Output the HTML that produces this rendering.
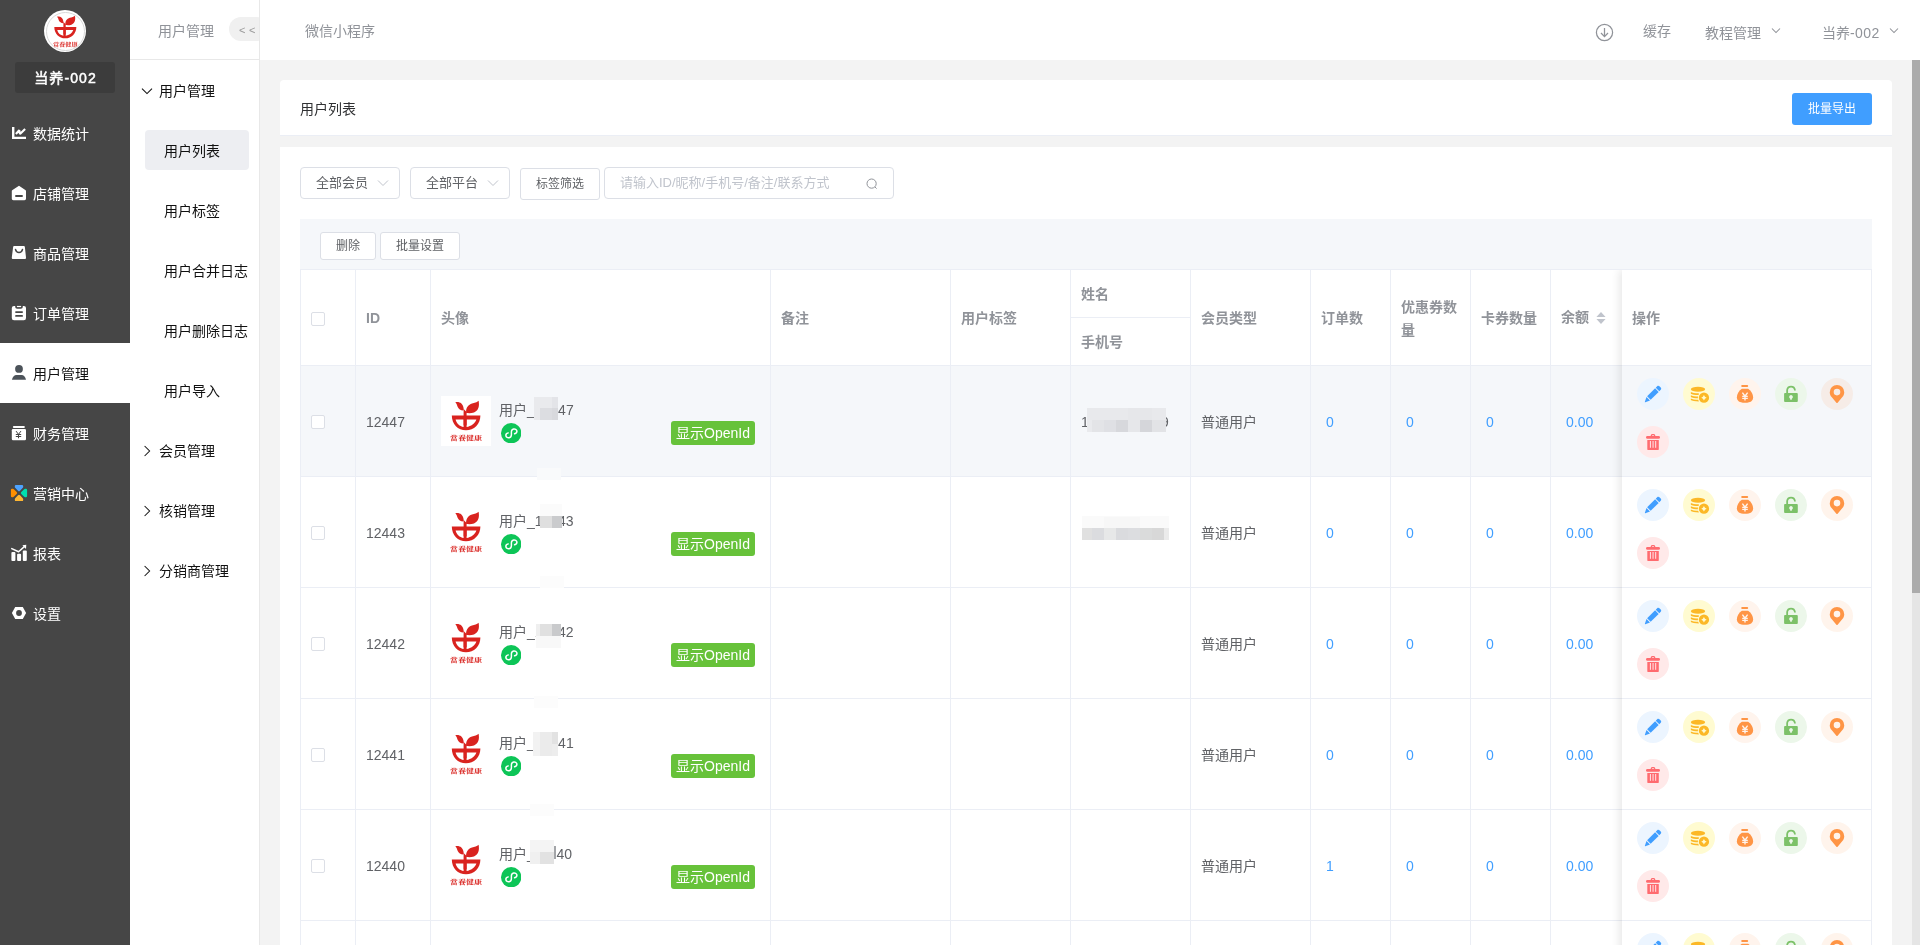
<!DOCTYPE html>
<html lang="zh-CN"><head><meta charset="utf-8"><title>用户列表</title>
<style>
*{box-sizing:border-box;margin:0;padding:0}
html,body{width:1920px;height:945px;overflow:hidden}
body{-webkit-font-smoothing:antialiased;background:#f3f3f3;font-family:"Liberation Sans","Noto Sans CJK SC",sans-serif;font-size:14px;color:#606266;position:relative}
.abs{position:absolute}
#side{position:absolute;left:0;top:0;width:130px;height:945px;background:#464646}
#side,#sub,#top,.card{will-change:transform}
#side .lg{position:absolute;left:44px;top:10px;width:42px;height:42px;border-radius:50%;background:#fff;overflow:hidden}
#side .lg svg{position:absolute;left:1.7px;top:2.4px}
#side .lg:after{content:"";position:absolute;left:1.5px;top:1.5px;right:1.5px;bottom:1.5px;border:1px solid #d8d8d8;border-radius:50%}
#side .nm{position:absolute;left:15px;top:62px;width:100px;height:31px;background:#3c3c3c;border-radius:3px;color:#fff;font-size:14px;font-weight:normal;-webkit-text-stroke:.5px #fff;text-align:center;line-height:32px;letter-spacing:1.1px;padding-left:1px}
.m1{position:absolute;left:0;width:130px;height:60px;color:#fff;font-size:14px;line-height:60px}
.m1.act{background:#fff;color:#111}
.m1 .mi{position:absolute;left:12px;top:23px}
.m1 span{position:absolute;left:33px;top:1px;white-space:nowrap}
#sub{position:absolute;left:130px;top:0;width:130px;height:945px;background:#fff;border-right:1px solid #e8e8e8}
#sub .hd{position:absolute;left:0;top:0;width:129px;height:60px;border-bottom:1px solid #e8e8e8;color:#909399;font-size:14px;line-height:60px}
#sub .hd span{position:absolute;left:28px;top:1px}
#sub .hd i{position:absolute;left:99px;top:17px;width:40px;height:24px;border-radius:12px;background:#f0f0f0;font-style:normal;color:#999;font-size:11px;line-height:27px;padding-left:10px;letter-spacing:3.5px;overflow:hidden}
#sub .hd{overflow:hidden}
.g{position:absolute;left:0;width:129px;height:60px;line-height:60px;color:#111;font-size:14px}
.g .chev{position:absolute;left:11px;top:24px}
.g span{position:absolute;left:29px;top:0;white-space:nowrap}
.s{position:absolute;left:15px;width:104px;height:40px;line-height:40px;color:#111;font-size:14px;border-radius:4px}
.s.act{background:#edeef2}
.s span{position:absolute;left:19px;top:1px;white-space:nowrap}
#top{position:absolute;left:260px;top:0;width:1660px;height:60px;background:#fff;color:#909399;font-size:14px}
#top span{position:absolute;white-space:nowrap;line-height:20px}
#sb{position:absolute;left:1912px;top:60px;width:8px;height:885px;background:#e5e5e5}
#sb i{position:absolute;left:0;top:0;width:8px;height:533px;background:#ababab}
.card{position:absolute;left:280px;width:1612px;background:#fff;border-radius:4px}
#c1{top:80px;height:56px;border-radius:4px 4px 0 0;border-bottom:1px solid #ebeef5}
#c1 .tt{position:absolute;left:20px;top:19px;font-size:14px;color:#303133;line-height:20px}
#c1 .bt{position:absolute;left:1512px;top:13px;width:80px;height:32px;background:#409eff;border-radius:3px;color:#fff;font-size:12px;text-align:center;line-height:32px}
#c2{top:147px;height:820px;border-radius:0}
.sel{position:absolute;top:20px;width:100px;height:32px;border:1px solid #dcdfe6;border-radius:4px;font-size:13px;color:#606266;line-height:30px;padding-left:15px;background:#fff}
.sel svg{position:absolute;right:10px;top:9px}
.btn{position:absolute;border:1px solid #dcdfe6;border-radius:3px;background:#fff;font-size:12px;color:#606266;text-align:center}
.inp{position:absolute;left:324px;top:20px;width:290px;height:32px;border:1px solid #dcdfe6;border-radius:4px;font-size:13px;color:#c0c4cc;line-height:30px;padding-left:15px;background:#fff}
.inp svg{position:absolute;right:14px;top:9px}
#tb{position:absolute;left:20px;top:72px;width:1572px;height:51px;background:#f5f7fa}
#tbl{position:absolute;left:20px;top:122px;width:1572px;height:700px;border-left:1px solid #ebeef5;border-top:1px solid #ebeef5;overflow:hidden}
#tbl .vl{position:absolute;top:0;width:1px;height:700px;background:#ebeef5}
#tbl .th{position:absolute;font-weight:bold;color:#909399;font-size:14px;line-height:23px;white-space:nowrap}
.hr{position:absolute;left:0;top:0;width:1572px;height:96px;border-bottom:1px solid #ebeef5}
.tr{position:absolute;left:-1px;width:1323px;height:111px;border-bottom:1px solid #ebeef5}
.tr.hov,.fr.hov{background:#f5f7fa}
.tr .t{position:absolute;font-size:14px;color:#606266;line-height:23px;white-space:nowrap}
.tr .t.lk{color:#409eff}
.cb{position:absolute;width:14px;height:14px;border:1px solid #dcdfe6;border-radius:2px;background:#fff}
.av{position:absolute;left:141px;top:30px;background:#fff}
.mp{position:absolute;left:200.9px;top:56.7px}
.oid{position:absolute;left:371px;top:55px;width:84px;height:24px;background:#67c23a;color:#fff;font-size:14px;line-height:24px;text-align:center;border-radius:3px;white-space:nowrap}
.gap{display:inline-block;height:1px}
.px{position:absolute;display:block}
#fx{position:absolute;left:1321px;top:0;width:250px;height:700px;background:#fff;border-right:1px solid #ebeef5;box-shadow:-3px 0 8px rgba(0,0,0,.09)}
.fh{position:absolute;left:0;top:0;width:249px;height:96px;border-bottom:1px solid #ebeef5}
.fh span{position:absolute;left:10px;top:37px;font-weight:bold;color:#909399;line-height:23px}
.fr{position:absolute;left:0;width:249px;height:111px;border-bottom:1px solid #ebeef5}
.ab{position:absolute}
</style></head><body>
<div id="side">
<div class="lg"><svg class="" viewBox="0 0 50 50" width="38.5" height="38.5"><g fill="#d9231f">
<path d="M14.3 6.2 C18 5.2 22 7 22.6 12.2 C22.8 13.4 22.7 14.2 22.4 14.6 C19.5 14.4 17.6 13.2 16.6 10.8 C16 9 15.6 7.4 14.3 6.2Z"/>
<path d="M37.6 4.8 C38.6 10 37.6 14.6 33 16.4 C30.4 17.4 27.6 17.2 25.2 17 C24.6 12 27 8.6 31 7.4 C33.6 6.8 36 6.4 37.6 4.8Z"/>
<path d="M22.6 13 L25.6 16 L25.6 29.2 L22.6 29.2Z"/>
<path d="M10.8 19.4 L39.4 19.4 C39.4 28 33 34.2 25 34.2 C17 34.2 10.8 28 10.8 19.4Z M14.6 23.4 C15.6 27.6 18.6 30.2 22.6 30.9 L22.6 23.4Z M25.6 23.4 L25.6 30.9 C30 30.2 34 27.6 35.4 23.4Z" fill-rule="evenodd"/>
</g><text x="25" y="44.4" text-anchor="middle" font-size="6.2" font-weight="bold" fill="#d9231f" font-family="'Noto Serif CJK SC','Noto Sans CJK SC',serif" textLength="32" lengthAdjust="spacingAndGlyphs">當養健康</text></svg></div>
<div class="nm">当养-002</div>
<div class="m1" style="top:103px"><svg class="mi" viewBox="0 0 14 14" width="14" height="14" style="overflow:visible"><path d="M0 0.9H2.4V10.8H14V13.1H0Z" fill="#fff"/><path d="M3.9 8L7.2 4.3L8 7.9L13.1 2.9" fill="none" stroke="#fff" stroke-width="2.1" stroke-linejoin="bevel"/></svg><span>数据统计</span></div>
<div class="m1" style="top:163px"><svg class="mi" viewBox="0 0 14 14" width="14" height="14" style="overflow:visible"><path d="M7 -0.3L13.3 3.9C13.8 4.2 14 4.5 14 5V12.6C14 13.6 13.4 14.2 12.4 14.2H1.4C0.4 14.2 -0.2 13.6 -0.2 12.6V5C-0.2 4.5 0 4.2 0.5 3.9Z M4 9A0.9 0.9 0 0 0 4 10.9H10A0.9 0.9 0 0 0 10 9Z" fill="#fff" fill-rule="evenodd"/></svg><span>店铺管理</span></div>
<div class="m1" style="top:223px"><svg class="mi" viewBox="0 0 14 14" width="14" height="14" style="overflow:visible"><path d="M2.4 0H11.6C12.4 0 12.8 0.4 12.9 1.2L14 11.6C14.1 12.6 13.6 13.1 12.6 13.1H1.2C0.2 13.1 -0.3 12.6 -0.2 11.6L1.1 1.2C1.2 0.4 1.6 0 2.4 0Z" fill="#fff"/><path d="M3.5 3.4C4 5.6 5.2 6.6 7 6.6C8.8 6.6 10 5.6 10.5 3.4" fill="none" stroke="#464646" stroke-width="1.5" stroke-linecap="round"/></svg><span>商品管理</span></div>
<div class="m1" style="top:283px"><svg class="mi" viewBox="0 0 14 14" width="14" height="14" style="overflow:visible"><rect x="-0.2" y="-0.1" width="14.2" height="14.3" rx="2.2" fill="#fff"/><path d="M3.2 -0.2H10.8V0.8C10.8 2 10 2.8 8.8 2.8H5.2C4 2.8 3.2 2 3.2 0.8Z" fill="#464646"/><rect x="4.9" y="-0.1" width="4.2" height="1.2" fill="#fff"/><rect x="3.2" y="5.2" width="7.7" height="1.7" rx="0.6" fill="#464646"/><rect x="3.2" y="9.1" width="7.7" height="1.7" rx="0.6" fill="#464646"/></svg><span>订单管理</span></div>
<div class="m1 act" style="top:343px"><svg class="mi" viewBox="0 0 14 14" width="14" height="14" style="overflow:visible"><circle cx="7" cy="2.9" r="3.9" fill="#4c535a"/><path d="M-0.1 13.8C0.6 10.6 2.4 8.9 4.4 8.9H9.6C11.6 8.9 13.4 10.6 14 13.8Z" fill="#4c535a"/></svg><span>用户管理</span></div>
<div class="m1" style="top:403px"><svg class="mi" viewBox="0 0 14 14" width="14" height="14" style="overflow:visible"><rect x="0.9" y="-0.1" width="12" height="2.1" rx="1" fill="#fff"/><rect x="-0.2" y="3" width="14.2" height="11.2" rx="1.2" fill="#fff"/><path d="M4.3 5.4L6.5 8.4L8.7 5.4M4.2 8.5H8.8M4.2 10.5H8.8M6.5 8.4V11.9" fill="none" stroke="#464646" stroke-width="1" stroke-linecap="round"/></svg><span>财务管理</span></div>
<div class="m1" style="top:463px"><svg class="mi" viewBox="0 0 14 14" width="14" height="14" style="overflow:visible"><g transform="translate(7,7)"><path d="M-3 -8.1H3Q4.2 -8.1 4.2 -6.9V-6.3Q4.2 -5.5 3.6 -4.9L1 -2.3Q0 -1.3 -1 -2.3L-3.6 -4.9Q-4.2 -5.5 -4.2 -6.3V-6.9Q-4.2 -8.1 -3 -8.1Z" fill="#4da3ff" transform="rotate(0)"/><path d="M-3 -8.1H3Q4.2 -8.1 4.2 -6.9V-6.3Q4.2 -5.5 3.6 -4.9L1 -2.3Q0 -1.3 -1 -2.3L-3.6 -4.9Q-4.2 -5.5 -4.2 -6.3V-6.9Q-4.2 -8.1 -3 -8.1Z" fill="#00dfb0" transform="rotate(90)"/><path d="M-3 -8.1H3Q4.2 -8.1 4.2 -6.9V-6.3Q4.2 -5.5 3.6 -4.9L1 -2.3Q0 -1.3 -1 -2.3L-3.6 -4.9Q-4.2 -5.5 -4.2 -6.3V-6.9Q-4.2 -8.1 -3 -8.1Z" fill="#ffb733" transform="rotate(180)"/><path d="M-3 -8.1H3Q4.2 -8.1 4.2 -6.9V-6.3Q4.2 -5.5 3.6 -4.9L1 -2.3Q0 -1.3 -1 -2.3L-3.6 -4.9Q-4.2 -5.5 -4.2 -6.3V-6.9Q-4.2 -8.1 -3 -8.1Z" fill="#ff8f00" transform="rotate(270)"/></g></svg><span>营销中心</span></div>
<div class="m1" style="top:523px"><svg class="mi" viewBox="0 0 14 14" width="14" height="14" style="overflow:visible"><g transform="translate(-1,-1)"><rect x="0.4" y="6.9" width="4" height="9" rx="1" fill="#fff"/><rect x="6.1" y="8.8" width="4" height="7.1" rx="1" fill="#fff"/><rect x="11.8" y="5.5" width="4" height="10.4" rx="1" fill="#fff"/><path d="M0.2 3.4L7.6 6.8L13.6 1.4" fill="none" stroke="#fff" stroke-width="1.5" stroke-linejoin="round"/><path d="M11.4 0.2L15.3 -0.2L15 3.9Z" fill="#fff"/></g></svg><span>报表</span></div>
<div class="m1" style="top:583px"><svg class="mi" viewBox="0 0 14 14" width="14" height="14" style="overflow:visible"><path d="M-0.1 7L3.2 1H10.8L14.1 7L10.8 13H3.2Z M7 4.1A2.9 2.9 0 1 0 7 9.9A2.9 2.9 0 1 0 7 4.1Z" fill="#fff" fill-rule="evenodd"/></svg><span>设置</span></div>
</div>
<div id="sub">
<div class="hd"><span>用户管理</span><i>&lt;&lt;</i></div>
<div class="g" style="top:61px"><svg class="chev" viewBox="0 0 12 12" width="12" height="12"><path d="M1 3.6L6 8.6L11 3.6" fill="none" stroke="#111" stroke-width="1.05"/></svg><span>用户管理</span></div>
<div class="s act" style="top:130px"><span>用户列表</span></div>
<div class="s" style="top:190px"><span>用户标签</span></div>
<div class="s" style="top:250px"><span>用户合并日志</span></div>
<div class="s" style="top:310px"><span>用户删除日志</span></div>
<div class="s" style="top:370px"><span>用户导入</span></div>
<div class="g" style="top:421px"><svg class="chev" viewBox="0 0 12 12" width="12" height="12"><path d="M3.6 1L8.6 6L3.6 11" fill="none" stroke="#111" stroke-width="1.05"/></svg><span>会员管理</span></div>
<div class="g" style="top:481px"><svg class="chev" viewBox="0 0 12 12" width="12" height="12"><path d="M3.6 1L8.6 6L3.6 11" fill="none" stroke="#111" stroke-width="1.05"/></svg><span>核销管理</span></div>
<div class="g" style="top:541px"><svg class="chev" viewBox="0 0 12 12" width="12" height="12"><path d="M3.6 1L8.6 6L3.6 11" fill="none" stroke="#111" stroke-width="1.05"/></svg><span>分销商管理</span></div>
</div>
<div id="top">
<span style="left:45px;top:21px">微信小程序</span>
<svg class="abs" style="left:1335px;top:23px" width="19" height="19" viewBox="0 0 19 19"><circle cx="9.5" cy="9.5" r="8.1" fill="none" stroke="#909399" stroke-width="1.25"/><path d="M9.5 5V13.4M6 10L9.5 13.6L13 10" fill="none" stroke="#909399" stroke-width="1.25"/></svg>
<span style="left:1383px;top:21px">缓存</span>
<span style="left:1445px;top:23px">教程管理</span>
<svg class="abs" style="left:1511px;top:27px" width="10" height="8" viewBox="0 0 10 8"><path d="M1 1.5L5 5.5L9 1.5" fill="none" stroke="#8d9096" stroke-width="1.05"/></svg>
<span style="left:1562px;top:23px">当养<b style="font-weight:normal;letter-spacing:.45px">-002</b></span>
<svg class="abs" style="left:1629px;top:27px" width="10" height="8" viewBox="0 0 10 8"><path d="M1 1.5L5 5.5L9 1.5" fill="none" stroke="#8d9096" stroke-width="1.05"/></svg>
</div>
<div id="sb"><i></i></div>
<div class="card" id="c1"><span class="tt">用户列表</span><span class="bt">批量导出</span></div>
<div class="card" id="c2">
<div class="sel" style="left:20px">全部会员<svg width="12" height="12" viewBox="0 0 12 12"><path d="M1 3.5L6 8.5L11 3.5" fill="none" stroke="#c0c4cc" stroke-width="1"/></svg></div>
<div class="sel" style="left:130px">全部平台<svg width="12" height="12" viewBox="0 0 12 12"><path d="M1 3.5L6 8.5L11 3.5" fill="none" stroke="#c0c4cc" stroke-width="1"/></svg></div>
<div class="btn" style="left:240px;top:21px;width:80px;height:32px;line-height:30px">标签筛选</div>
<div class="inp">请输入ID/昵称/手机号/备注/联系方式<svg width="14" height="14" viewBox="0 0 14 14"><circle cx="6.6" cy="6.6" r="4.6" fill="none" stroke="#909399" stroke-width="1"/><path d="M10 10L11.6 11.6" stroke="#909399" stroke-width="1"/></svg></div>
<div id="tb"><div class="btn" style="left:20px;top:13px;width:56px;height:28px;line-height:26px">删除</div><div class="btn" style="left:80px;top:13px;width:80px;height:28px;line-height:26px">批量设置</div></div>
<div id="tbl">
<div class="hr">
<span class="cb" style="left:10px;top:42px"></span>
<span class="th" style="left:65px;top:37px">ID</span>
<span class="th" style="left:140px;top:37px">头像</span>
<span class="th" style="left:480px;top:37px">备注</span>
<span class="th" style="left:660px;top:37px">用户标签</span>
<span class="th" style="left:780px;top:13px">姓名</span>
<span class="th" style="left:780px;top:61px">手机号</span>
<span class="th" style="left:900px;top:37px">会员类型</span>
<span class="th" style="left:1020px;top:37px">订单数</span>
<span class="th" style="left:1100px;top:26px">优惠券数<br>量</span>
<span class="th" style="left:1180px;top:37px">卡券数量</span>
<span class="th" style="left:1260px;top:36px">余额</span>
<svg class="abs" style="left:1294px;top:41px" width="12" height="14" viewBox="0 0 12 14"><path d="M6 1L10.6 6H1.4Z M6 13L10.6 8H1.4Z" fill="#c0c4cc"/></svg>
<div class="abs" style="left:770px;top:47px;width:120px;height:1px;background:#ebeef5"></div>
</div>
<div class="tr hov" style="top:96px"><span class="cb" style="left:11px;top:49px"></span><span class="t" style="left:66px;top:45px">12447</span><svg class="av" viewBox="0 0 50 50" width="50" height="50"><g fill="#d9231f">
<path d="M14.3 6.2 C18 5.2 22 7 22.6 12.2 C22.8 13.4 22.7 14.2 22.4 14.6 C19.5 14.4 17.6 13.2 16.6 10.8 C16 9 15.6 7.4 14.3 6.2Z"/>
<path d="M37.6 4.8 C38.6 10 37.6 14.6 33 16.4 C30.4 17.4 27.6 17.2 25.2 17 C24.6 12 27 8.6 31 7.4 C33.6 6.8 36 6.4 37.6 4.8Z"/>
<path d="M22.6 13 L25.6 16 L25.6 29.2 L22.6 29.2Z"/>
<path d="M10.8 19.4 L39.4 19.4 C39.4 28 33 34.2 25 34.2 C17 34.2 10.8 28 10.8 19.4Z M14.6 23.4 C15.6 27.6 18.6 30.2 22.6 30.9 L22.6 23.4Z M25.6 23.4 L25.6 30.9 C30 30.2 34 27.6 35.4 23.4Z" fill-rule="evenodd"/>
</g><text x="25" y="44.4" text-anchor="middle" font-size="6.2" font-weight="bold" fill="#d9231f" font-family="'Noto Serif CJK SC','Noto Sans CJK SC',serif" textLength="32" lengthAdjust="spacingAndGlyphs">當養健康</text></svg><span class="t" style="left:199px;top:33px">用户_<span class="gap" style="width:23.3px"></span>47</span><svg class="mp" viewBox="0 0 20 20" width="20.4" height="20.4"><circle cx="10" cy="10" r="10" fill="#0dc557"/><path d="M13.3 10.6C15 10.2 15.8 9.1 15.6 7.8C15.3 6.3 13.8 5.6 12.4 5.9C11 6.2 10.2 7.3 10.2 8.6V11.6C10.2 12.9 9.4 14.1 8 14.4C6.6 14.7 5.1 14 4.8 12.5C4.6 11.2 5.4 10.1 7.1 9.7" fill="none" stroke="#fff" stroke-width="1.45" stroke-linecap="round"/></svg><span class="oid">显示OpenId</span><span class="t" style="left:781px;top:45px">1</span><span class="t" style="left:861px;top:45px">9</span><span class="t" style="left:901px;top:45px">普通用户</span><span class="t lk" style="left:1026px;top:45px">0</span><span class="t lk" style="left:1106px;top:45px">0</span><span class="t lk" style="left:1186px;top:45px">0</span><span class="t lk" style="left:1266px;top:45px">0.00</span></div><div class="tr" style="top:207px"><span class="cb" style="left:11px;top:49px"></span><span class="t" style="left:66px;top:45px">12443</span><svg class="av" viewBox="0 0 50 50" width="50" height="50"><g fill="#d9231f">
<path d="M14.3 6.2 C18 5.2 22 7 22.6 12.2 C22.8 13.4 22.7 14.2 22.4 14.6 C19.5 14.4 17.6 13.2 16.6 10.8 C16 9 15.6 7.4 14.3 6.2Z"/>
<path d="M37.6 4.8 C38.6 10 37.6 14.6 33 16.4 C30.4 17.4 27.6 17.2 25.2 17 C24.6 12 27 8.6 31 7.4 C33.6 6.8 36 6.4 37.6 4.8Z"/>
<path d="M22.6 13 L25.6 16 L25.6 29.2 L22.6 29.2Z"/>
<path d="M10.8 19.4 L39.4 19.4 C39.4 28 33 34.2 25 34.2 C17 34.2 10.8 28 10.8 19.4Z M14.6 23.4 C15.6 27.6 18.6 30.2 22.6 30.9 L22.6 23.4Z M25.6 23.4 L25.6 30.9 C30 30.2 34 27.6 35.4 23.4Z" fill-rule="evenodd"/>
</g><text x="25" y="44.4" text-anchor="middle" font-size="6.2" font-weight="bold" fill="#d9231f" font-family="'Noto Serif CJK SC','Noto Sans CJK SC',serif" textLength="32" lengthAdjust="spacingAndGlyphs">當養健康</text></svg><span class="t" style="left:199px;top:33px">用户_1<span class="gap" style="width:15.5px"></span>43</span><svg class="mp" viewBox="0 0 20 20" width="20.4" height="20.4"><circle cx="10" cy="10" r="10" fill="#0dc557"/><path d="M13.3 10.6C15 10.2 15.8 9.1 15.6 7.8C15.3 6.3 13.8 5.6 12.4 5.9C11 6.2 10.2 7.3 10.2 8.6V11.6C10.2 12.9 9.4 14.1 8 14.4C6.6 14.7 5.1 14 4.8 12.5C4.6 11.2 5.4 10.1 7.1 9.7" fill="none" stroke="#fff" stroke-width="1.45" stroke-linecap="round"/></svg><span class="oid">显示OpenId</span><span class="t" style="left:901px;top:45px">普通用户</span><span class="t lk" style="left:1026px;top:45px">0</span><span class="t lk" style="left:1106px;top:45px">0</span><span class="t lk" style="left:1186px;top:45px">0</span><span class="t lk" style="left:1266px;top:45px">0.00</span></div><div class="tr" style="top:318px"><span class="cb" style="left:11px;top:49px"></span><span class="t" style="left:66px;top:45px">12442</span><svg class="av" viewBox="0 0 50 50" width="50" height="50"><g fill="#d9231f">
<path d="M14.3 6.2 C18 5.2 22 7 22.6 12.2 C22.8 13.4 22.7 14.2 22.4 14.6 C19.5 14.4 17.6 13.2 16.6 10.8 C16 9 15.6 7.4 14.3 6.2Z"/>
<path d="M37.6 4.8 C38.6 10 37.6 14.6 33 16.4 C30.4 17.4 27.6 17.2 25.2 17 C24.6 12 27 8.6 31 7.4 C33.6 6.8 36 6.4 37.6 4.8Z"/>
<path d="M22.6 13 L25.6 16 L25.6 29.2 L22.6 29.2Z"/>
<path d="M10.8 19.4 L39.4 19.4 C39.4 28 33 34.2 25 34.2 C17 34.2 10.8 28 10.8 19.4Z M14.6 23.4 C15.6 27.6 18.6 30.2 22.6 30.9 L22.6 23.4Z M25.6 23.4 L25.6 30.9 C30 30.2 34 27.6 35.4 23.4Z" fill-rule="evenodd"/>
</g><text x="25" y="44.4" text-anchor="middle" font-size="6.2" font-weight="bold" fill="#d9231f" font-family="'Noto Serif CJK SC','Noto Sans CJK SC',serif" textLength="32" lengthAdjust="spacingAndGlyphs">當養健康</text></svg><span class="t" style="left:199px;top:33px">用户_1<span class="gap" style="width:15.5px"></span>42</span><svg class="mp" viewBox="0 0 20 20" width="20.4" height="20.4"><circle cx="10" cy="10" r="10" fill="#0dc557"/><path d="M13.3 10.6C15 10.2 15.8 9.1 15.6 7.8C15.3 6.3 13.8 5.6 12.4 5.9C11 6.2 10.2 7.3 10.2 8.6V11.6C10.2 12.9 9.4 14.1 8 14.4C6.6 14.7 5.1 14 4.8 12.5C4.6 11.2 5.4 10.1 7.1 9.7" fill="none" stroke="#fff" stroke-width="1.45" stroke-linecap="round"/></svg><span class="oid">显示OpenId</span><span class="t" style="left:901px;top:45px">普通用户</span><span class="t lk" style="left:1026px;top:45px">0</span><span class="t lk" style="left:1106px;top:45px">0</span><span class="t lk" style="left:1186px;top:45px">0</span><span class="t lk" style="left:1266px;top:45px">0.00</span></div><div class="tr" style="top:429px"><span class="cb" style="left:11px;top:49px"></span><span class="t" style="left:66px;top:45px">12441</span><svg class="av" viewBox="0 0 50 50" width="50" height="50"><g fill="#d9231f">
<path d="M14.3 6.2 C18 5.2 22 7 22.6 12.2 C22.8 13.4 22.7 14.2 22.4 14.6 C19.5 14.4 17.6 13.2 16.6 10.8 C16 9 15.6 7.4 14.3 6.2Z"/>
<path d="M37.6 4.8 C38.6 10 37.6 14.6 33 16.4 C30.4 17.4 27.6 17.2 25.2 17 C24.6 12 27 8.6 31 7.4 C33.6 6.8 36 6.4 37.6 4.8Z"/>
<path d="M22.6 13 L25.6 16 L25.6 29.2 L22.6 29.2Z"/>
<path d="M10.8 19.4 L39.4 19.4 C39.4 28 33 34.2 25 34.2 C17 34.2 10.8 28 10.8 19.4Z M14.6 23.4 C15.6 27.6 18.6 30.2 22.6 30.9 L22.6 23.4Z M25.6 23.4 L25.6 30.9 C30 30.2 34 27.6 35.4 23.4Z" fill-rule="evenodd"/>
</g><text x="25" y="44.4" text-anchor="middle" font-size="6.2" font-weight="bold" fill="#d9231f" font-family="'Noto Serif CJK SC','Noto Sans CJK SC',serif" textLength="32" lengthAdjust="spacingAndGlyphs">當養健康</text></svg><span class="t" style="left:199px;top:33px">用户_<span class="gap" style="width:23.3px"></span>41</span><svg class="mp" viewBox="0 0 20 20" width="20.4" height="20.4"><circle cx="10" cy="10" r="10" fill="#0dc557"/><path d="M13.3 10.6C15 10.2 15.8 9.1 15.6 7.8C15.3 6.3 13.8 5.6 12.4 5.9C11 6.2 10.2 7.3 10.2 8.6V11.6C10.2 12.9 9.4 14.1 8 14.4C6.6 14.7 5.1 14 4.8 12.5C4.6 11.2 5.4 10.1 7.1 9.7" fill="none" stroke="#fff" stroke-width="1.45" stroke-linecap="round"/></svg><span class="oid">显示OpenId</span><span class="t" style="left:901px;top:45px">普通用户</span><span class="t lk" style="left:1026px;top:45px">0</span><span class="t lk" style="left:1106px;top:45px">0</span><span class="t lk" style="left:1186px;top:45px">0</span><span class="t lk" style="left:1266px;top:45px">0.00</span></div><div class="tr" style="top:540px"><span class="cb" style="left:11px;top:49px"></span><span class="t" style="left:66px;top:45px">12440</span><svg class="av" viewBox="0 0 50 50" width="50" height="50"><g fill="#d9231f">
<path d="M14.3 6.2 C18 5.2 22 7 22.6 12.2 C22.8 13.4 22.7 14.2 22.4 14.6 C19.5 14.4 17.6 13.2 16.6 10.8 C16 9 15.6 7.4 14.3 6.2Z"/>
<path d="M37.6 4.8 C38.6 10 37.6 14.6 33 16.4 C30.4 17.4 27.6 17.2 25.2 17 C24.6 12 27 8.6 31 7.4 C33.6 6.8 36 6.4 37.6 4.8Z"/>
<path d="M22.6 13 L25.6 16 L25.6 29.2 L22.6 29.2Z"/>
<path d="M10.8 19.4 L39.4 19.4 C39.4 28 33 34.2 25 34.2 C17 34.2 10.8 28 10.8 19.4Z M14.6 23.4 C15.6 27.6 18.6 30.2 22.6 30.9 L22.6 23.4Z M25.6 23.4 L25.6 30.9 C30 30.2 34 27.6 35.4 23.4Z" fill-rule="evenodd"/>
</g><text x="25" y="44.4" text-anchor="middle" font-size="6.2" font-weight="bold" fill="#d9231f" font-family="'Noto Serif CJK SC','Noto Sans CJK SC',serif" textLength="32" lengthAdjust="spacingAndGlyphs">當養健康</text></svg><span class="t" style="left:199px;top:33px">用户_<span class="gap" style="width:21.6px"></span>40</span><svg class="mp" viewBox="0 0 20 20" width="20.4" height="20.4"><circle cx="10" cy="10" r="10" fill="#0dc557"/><path d="M13.3 10.6C15 10.2 15.8 9.1 15.6 7.8C15.3 6.3 13.8 5.6 12.4 5.9C11 6.2 10.2 7.3 10.2 8.6V11.6C10.2 12.9 9.4 14.1 8 14.4C6.6 14.7 5.1 14 4.8 12.5C4.6 11.2 5.4 10.1 7.1 9.7" fill="none" stroke="#fff" stroke-width="1.45" stroke-linecap="round"/></svg><span class="oid">显示OpenId</span><span class="t" style="left:901px;top:45px">普通用户</span><span class="t lk" style="left:1026px;top:45px">1</span><span class="t lk" style="left:1106px;top:45px">0</span><span class="t lk" style="left:1186px;top:45px">0</span><span class="t lk" style="left:1266px;top:45px">0.00</span></div><div class="tr" style="top:651px"><span class="cb" style="left:11px;top:49px"></span><span class="t" style="left:66px;top:45px">12439</span><svg class="av" viewBox="0 0 50 50" width="50" height="50"><g fill="#d9231f">
<path d="M14.3 6.2 C18 5.2 22 7 22.6 12.2 C22.8 13.4 22.7 14.2 22.4 14.6 C19.5 14.4 17.6 13.2 16.6 10.8 C16 9 15.6 7.4 14.3 6.2Z"/>
<path d="M37.6 4.8 C38.6 10 37.6 14.6 33 16.4 C30.4 17.4 27.6 17.2 25.2 17 C24.6 12 27 8.6 31 7.4 C33.6 6.8 36 6.4 37.6 4.8Z"/>
<path d="M22.6 13 L25.6 16 L25.6 29.2 L22.6 29.2Z"/>
<path d="M10.8 19.4 L39.4 19.4 C39.4 28 33 34.2 25 34.2 C17 34.2 10.8 28 10.8 19.4Z M14.6 23.4 C15.6 27.6 18.6 30.2 22.6 30.9 L22.6 23.4Z M25.6 23.4 L25.6 30.9 C30 30.2 34 27.6 35.4 23.4Z" fill-rule="evenodd"/>
</g><text x="25" y="44.4" text-anchor="middle" font-size="6.2" font-weight="bold" fill="#d9231f" font-family="'Noto Serif CJK SC','Noto Sans CJK SC',serif" textLength="32" lengthAdjust="spacingAndGlyphs">當養健康</text></svg><span class="t" style="left:199px;top:33px">用户_<span class="gap" style="width:23.3px"></span>39</span><svg class="mp" viewBox="0 0 20 20" width="20.4" height="20.4"><circle cx="10" cy="10" r="10" fill="#0dc557"/><path d="M13.3 10.6C15 10.2 15.8 9.1 15.6 7.8C15.3 6.3 13.8 5.6 12.4 5.9C11 6.2 10.2 7.3 10.2 8.6V11.6C10.2 12.9 9.4 14.1 8 14.4C6.6 14.7 5.1 14 4.8 12.5C4.6 11.2 5.4 10.1 7.1 9.7" fill="none" stroke="#fff" stroke-width="1.45" stroke-linecap="round"/></svg><span class="oid">显示OpenId</span><span class="t" style="left:901px;top:45px">普通用户</span><span class="t lk" style="left:1026px;top:45px">0</span><span class="t lk" style="left:1106px;top:45px">0</span><span class="t lk" style="left:1186px;top:45px">0</span><span class="t lk" style="left:1266px;top:45px">0.00</span></div><i class="px" style="left:233px;top:127px;width:18px;height:11px;background:#e9eaed"></i><i class="px" style="left:251px;top:127px;width:6px;height:11px;background:#e3e4e8"></i><i class="px" style="left:233px;top:138px;width:6px;height:12px;background:#e9eaed"></i><i class="px" style="left:239px;top:138px;width:12px;height:12px;background:#dcdde1"></i><i class="px" style="left:251px;top:138px;width:6px;height:12px;background:#d8d9dd"></i><i class="px" style="left:236px;top:198px;width:24px;height:12px;background:#f9fafb"></i><i class="px" style="left:239px;top:234px;width:22px;height:12px;background:#fbfbfb"></i><i class="px" style="left:239px;top:246px;width:12px;height:12px;background:#dfdfdf"></i><i class="px" style="left:251px;top:246px;width:10px;height:12px;background:#cacbcd"></i><i class="px" style="left:239px;top:306px;width:24px;height:12px;background:#fcfcfc"></i><i class="px" style="left:235px;top:354px;width:4px;height:12px;background:#efefef"></i><i class="px" style="left:239px;top:354px;width:12px;height:12px;background:#e0e0e0"></i><i class="px" style="left:251px;top:354px;width:9px;height:12px;background:#c9cacc"></i><i class="px" style="left:235px;top:366px;width:25px;height:12px;background:#f8f8f8"></i><i class="px" style="left:233px;top:426px;width:24px;height:12px;background:#fcfcfc"></i><i class="px" style="left:232px;top:462px;width:7px;height:24px;background:#f2f2f2"></i><i class="px" style="left:239px;top:462px;width:12px;height:24px;background:#ebebeb"></i><i class="px" style="left:251px;top:462px;width:6px;height:12px;background:#e2e2e2"></i><i class="px" style="left:251px;top:474px;width:6px;height:12px;background:#ededed"></i><i class="px" style="left:229px;top:534px;width:24px;height:12px;background:#fcfcfc"></i><i class="px" style="left:253px;top:576px;width:2px;height:13px;background:#a3a5a8"></i><i class="px" style="left:229px;top:570px;width:24px;height:12px;background:#f4f4f4"></i><i class="px" style="left:229px;top:582px;width:10px;height:12px;background:#f0f0f0"></i><i class="px" style="left:239px;top:582px;width:14px;height:12px;background:#e2e2e2"></i><i class="px" style="left:786px;top:138px;width:79px;height:12px;background:#e8e9ec"></i><i class="px" style="left:827px;top:138px;width:24px;height:12px;background:#e6e7ea"></i><i class="px" style="left:786px;top:150px;width:5px;height:12px;background:#e9eaed"></i><i class="px" style="left:791px;top:150px;width:12px;height:12px;background:#e3e4e7"></i><i class="px" style="left:803px;top:150px;width:12px;height:12px;background:#dfe0e4"></i><i class="px" style="left:815px;top:150px;width:12px;height:12px;background:#d7d8dc"></i><i class="px" style="left:827px;top:150px;width:12px;height:12px;background:#e6e7ea"></i><i class="px" style="left:839px;top:150px;width:12px;height:12px;background:#d5d6da"></i><i class="px" style="left:851px;top:150px;width:14px;height:12px;background:#e2e3e6"></i><i class="px" style="left:781px;top:246px;width:87px;height:12px;background:#fafafa"></i><i class="px" style="left:803px;top:247px;width:36px;height:11px;background:#f7f7f7"></i><i class="px" style="left:781px;top:258px;width:10px;height:12px;background:#e0e0e0"></i><i class="px" style="left:791px;top:258px;width:12px;height:12px;background:#dbdcdf"></i><i class="px" style="left:803px;top:258px;width:12px;height:12px;background:#e7e8e8"></i><i class="px" style="left:815px;top:258px;width:12px;height:12px;background:#dadbde"></i><i class="px" style="left:827px;top:258px;width:12px;height:12px;background:#dcdde0"></i><i class="px" style="left:839px;top:258px;width:12px;height:12px;background:#dadbdb"></i><i class="px" style="left:851px;top:258px;width:12px;height:12px;background:#d8d8d8"></i><i class="px" style="left:863px;top:258px;width:5px;height:12px;background:#ebebeb"></i>
<div class="vl" style="left:54px"></div><div class="vl" style="left:129px"></div><div class="vl" style="left:469px"></div><div class="vl" style="left:649px"></div><div class="vl" style="left:769px"></div><div class="vl" style="left:889px"></div><div class="vl" style="left:1009px"></div><div class="vl" style="left:1089px"></div><div class="vl" style="left:1169px"></div><div class="vl" style="left:1249px"></div>
<div id="fx"><div class="fh"><span>操作</span></div><div class="fr hov" style="top:96px"><svg class="ab" style="left:15px;top:12px" viewBox="0 0 32 32" width="32" height="32"><circle cx="16" cy="16" r="16" fill="#ecf5ff"/><g transform="rotate(45 16 16)" fill="#409eff"><path d="M13.5 9.6V7.6C13.5 6.6 14.2 6 15.1 6H16.9C17.8 6 18.5 6.6 18.5 7.6V9.6Z"/><rect x="13.5" y="10.5" width="5" height="11.3"/><path d="M13.5 22.7H18.5L16.3 27.2Q16 27.7 15.7 27.2Z"/></g></svg><svg class="ab" style="left:61px;top:12px" viewBox="0 0 32 32" width="32" height="32"><circle cx="16" cy="16" r="16" fill="#fffbd1"/><g fill="#fcb826"><ellipse cx="15" cy="11.25" rx="7.15" ry="2.4"/><path d="M7.85 14C9 14.9 12 15.3 15.8 15.3V17.1C12 17.1 8.8 16.7 7.85 15.8Z"/><path d="M7.85 17.2C9 18.1 12 18.5 15.8 18.5V20.3C12 20.3 8.8 19.9 7.85 19Z"/><path d="M7.85 20.4C9 21.3 12 21.7 15.8 21.7V23.4C12 23.4 8.8 23 7.85 22.1Z"/></g><circle cx="20.95" cy="19.7" r="6.1" fill="#fffbd1"/><circle cx="20.95" cy="19.7" r="5.15" fill="#fcb826"/><path transform="translate(20.95 19.7)" d="M0 -2.7Q0.7 -0.7 2.7 0Q0.7 0.7 0 2.7Q-0.7 0.7 -2.7 0Q-0.7 -0.7 0 -2.7Z" fill="#fffbd1"/></svg><svg class="ab" style="left:107px;top:12px" viewBox="0 0 32 32" width="32" height="32"><circle cx="16" cy="16" r="16" fill="#fff4ed"/><g fill="#ff9545"><rect x="12.2" y="7" width="7" height="2.1" rx="1"/><path d="M12.9 10.7H19.1C22.4 13 24.1 16 24.1 19.3C24.1 23 21.5 24.8 16 24.8C10.5 24.8 7.9 23 7.9 19.3C7.9 16 9.6 13 12.9 10.7Z"/></g><path d="M13.4 14.6L16 18.2L18.6 14.6M13.2 18.4H18.8M13.2 20.4H18.8M16 18.2V22.4" fill="none" stroke="#fff4ed" stroke-width="1.4"/></svg><svg class="ab" style="left:153px;top:12px" viewBox="0 0 32 32" width="32" height="32"><circle cx="16" cy="16" r="16" fill="#ecf7ea"/><path d="M12.15 15.4V12A3.9 3.9 0 0 1 19.9 12V12.6" fill="none" stroke="#7cc168" stroke-width="1.8"/><rect x="9.1" y="15" width="13.7" height="8.9" rx="0.9" fill="#7cc168"/><path d="M16 17.1A1.9 1.9 0 0 1 16.8 20.7V21.8H15.2V20.7A1.9 1.9 0 0 1 16 17.1Z" fill="#ecf7ea"/></svg><svg class="ab" style="left:199px;top:12px" viewBox="0 0 32 32" width="32" height="32"><circle cx="16" cy="16" r="16" fill="rgba(255,149,69,.1)"/><path d="M16 6.9A7.25 7.25 0 0 1 23.25 14.15C23.25 16 22.6 17.5 21.6 18.8L16.6 24.8Q16 25.4 15.4 24.8L10.4 18.8C9.4 17.5 8.75 16 8.75 14.15A7.25 7.25 0 0 1 16 6.9Z M16 10.8A3.3 3.3 0 1 0 16 17.4A3.3 3.3 0 1 0 16 10.8Z" fill="#ff9545" fill-rule="evenodd"/></svg><svg class="ab" style="left:15px;top:60px" viewBox="0 0 32 32" width="32" height="32"><circle cx="16" cy="16" r="16" fill="#ffe9e9"/><g fill="#ff6b6f"><rect x="9" y="10" width="14" height="2.8" rx="1.4"/><path d="M13.3 10.4L14.2 8.4Q14.4 8 14.9 8H17.1Q17.6 8 17.8 8.4L18.7 10.4H16.9V9.3H15.1V10.4Z"/><path d="M10.3 14.1H21.8V22.9C21.8 23.7 21.3 24.1 20.5 24.1H11.6C10.8 24.1 10.3 23.7 10.3 22.9Z"/></g><path d="M13.4 15V21.8M16.05 15V21.8M18.7 15V21.8" stroke="#ffe9e9" stroke-width="1"/></svg></div><div class="fr" style="top:207px"><svg class="ab" style="left:15px;top:12px" viewBox="0 0 32 32" width="32" height="32"><circle cx="16" cy="16" r="16" fill="#ecf5ff"/><g transform="rotate(45 16 16)" fill="#409eff"><path d="M13.5 9.6V7.6C13.5 6.6 14.2 6 15.1 6H16.9C17.8 6 18.5 6.6 18.5 7.6V9.6Z"/><rect x="13.5" y="10.5" width="5" height="11.3"/><path d="M13.5 22.7H18.5L16.3 27.2Q16 27.7 15.7 27.2Z"/></g></svg><svg class="ab" style="left:61px;top:12px" viewBox="0 0 32 32" width="32" height="32"><circle cx="16" cy="16" r="16" fill="#fffbd1"/><g fill="#fcb826"><ellipse cx="15" cy="11.25" rx="7.15" ry="2.4"/><path d="M7.85 14C9 14.9 12 15.3 15.8 15.3V17.1C12 17.1 8.8 16.7 7.85 15.8Z"/><path d="M7.85 17.2C9 18.1 12 18.5 15.8 18.5V20.3C12 20.3 8.8 19.9 7.85 19Z"/><path d="M7.85 20.4C9 21.3 12 21.7 15.8 21.7V23.4C12 23.4 8.8 23 7.85 22.1Z"/></g><circle cx="20.95" cy="19.7" r="6.1" fill="#fffbd1"/><circle cx="20.95" cy="19.7" r="5.15" fill="#fcb826"/><path transform="translate(20.95 19.7)" d="M0 -2.7Q0.7 -0.7 2.7 0Q0.7 0.7 0 2.7Q-0.7 0.7 -2.7 0Q-0.7 -0.7 0 -2.7Z" fill="#fffbd1"/></svg><svg class="ab" style="left:107px;top:12px" viewBox="0 0 32 32" width="32" height="32"><circle cx="16" cy="16" r="16" fill="#fff4ed"/><g fill="#ff9545"><rect x="12.2" y="7" width="7" height="2.1" rx="1"/><path d="M12.9 10.7H19.1C22.4 13 24.1 16 24.1 19.3C24.1 23 21.5 24.8 16 24.8C10.5 24.8 7.9 23 7.9 19.3C7.9 16 9.6 13 12.9 10.7Z"/></g><path d="M13.4 14.6L16 18.2L18.6 14.6M13.2 18.4H18.8M13.2 20.4H18.8M16 18.2V22.4" fill="none" stroke="#fff4ed" stroke-width="1.4"/></svg><svg class="ab" style="left:153px;top:12px" viewBox="0 0 32 32" width="32" height="32"><circle cx="16" cy="16" r="16" fill="#ecf7ea"/><path d="M12.15 15.4V12A3.9 3.9 0 0 1 19.9 12V12.6" fill="none" stroke="#7cc168" stroke-width="1.8"/><rect x="9.1" y="15" width="13.7" height="8.9" rx="0.9" fill="#7cc168"/><path d="M16 17.1A1.9 1.9 0 0 1 16.8 20.7V21.8H15.2V20.7A1.9 1.9 0 0 1 16 17.1Z" fill="#ecf7ea"/></svg><svg class="ab" style="left:199px;top:12px" viewBox="0 0 32 32" width="32" height="32"><circle cx="16" cy="16" r="16" fill="rgba(255,149,69,.1)"/><path d="M16 6.9A7.25 7.25 0 0 1 23.25 14.15C23.25 16 22.6 17.5 21.6 18.8L16.6 24.8Q16 25.4 15.4 24.8L10.4 18.8C9.4 17.5 8.75 16 8.75 14.15A7.25 7.25 0 0 1 16 6.9Z M16 10.8A3.3 3.3 0 1 0 16 17.4A3.3 3.3 0 1 0 16 10.8Z" fill="#ff9545" fill-rule="evenodd"/></svg><svg class="ab" style="left:15px;top:60px" viewBox="0 0 32 32" width="32" height="32"><circle cx="16" cy="16" r="16" fill="#ffe9e9"/><g fill="#ff6b6f"><rect x="9" y="10" width="14" height="2.8" rx="1.4"/><path d="M13.3 10.4L14.2 8.4Q14.4 8 14.9 8H17.1Q17.6 8 17.8 8.4L18.7 10.4H16.9V9.3H15.1V10.4Z"/><path d="M10.3 14.1H21.8V22.9C21.8 23.7 21.3 24.1 20.5 24.1H11.6C10.8 24.1 10.3 23.7 10.3 22.9Z"/></g><path d="M13.4 15V21.8M16.05 15V21.8M18.7 15V21.8" stroke="#ffe9e9" stroke-width="1"/></svg></div><div class="fr" style="top:318px"><svg class="ab" style="left:15px;top:12px" viewBox="0 0 32 32" width="32" height="32"><circle cx="16" cy="16" r="16" fill="#ecf5ff"/><g transform="rotate(45 16 16)" fill="#409eff"><path d="M13.5 9.6V7.6C13.5 6.6 14.2 6 15.1 6H16.9C17.8 6 18.5 6.6 18.5 7.6V9.6Z"/><rect x="13.5" y="10.5" width="5" height="11.3"/><path d="M13.5 22.7H18.5L16.3 27.2Q16 27.7 15.7 27.2Z"/></g></svg><svg class="ab" style="left:61px;top:12px" viewBox="0 0 32 32" width="32" height="32"><circle cx="16" cy="16" r="16" fill="#fffbd1"/><g fill="#fcb826"><ellipse cx="15" cy="11.25" rx="7.15" ry="2.4"/><path d="M7.85 14C9 14.9 12 15.3 15.8 15.3V17.1C12 17.1 8.8 16.7 7.85 15.8Z"/><path d="M7.85 17.2C9 18.1 12 18.5 15.8 18.5V20.3C12 20.3 8.8 19.9 7.85 19Z"/><path d="M7.85 20.4C9 21.3 12 21.7 15.8 21.7V23.4C12 23.4 8.8 23 7.85 22.1Z"/></g><circle cx="20.95" cy="19.7" r="6.1" fill="#fffbd1"/><circle cx="20.95" cy="19.7" r="5.15" fill="#fcb826"/><path transform="translate(20.95 19.7)" d="M0 -2.7Q0.7 -0.7 2.7 0Q0.7 0.7 0 2.7Q-0.7 0.7 -2.7 0Q-0.7 -0.7 0 -2.7Z" fill="#fffbd1"/></svg><svg class="ab" style="left:107px;top:12px" viewBox="0 0 32 32" width="32" height="32"><circle cx="16" cy="16" r="16" fill="#fff4ed"/><g fill="#ff9545"><rect x="12.2" y="7" width="7" height="2.1" rx="1"/><path d="M12.9 10.7H19.1C22.4 13 24.1 16 24.1 19.3C24.1 23 21.5 24.8 16 24.8C10.5 24.8 7.9 23 7.9 19.3C7.9 16 9.6 13 12.9 10.7Z"/></g><path d="M13.4 14.6L16 18.2L18.6 14.6M13.2 18.4H18.8M13.2 20.4H18.8M16 18.2V22.4" fill="none" stroke="#fff4ed" stroke-width="1.4"/></svg><svg class="ab" style="left:153px;top:12px" viewBox="0 0 32 32" width="32" height="32"><circle cx="16" cy="16" r="16" fill="#ecf7ea"/><path d="M12.15 15.4V12A3.9 3.9 0 0 1 19.9 12V12.6" fill="none" stroke="#7cc168" stroke-width="1.8"/><rect x="9.1" y="15" width="13.7" height="8.9" rx="0.9" fill="#7cc168"/><path d="M16 17.1A1.9 1.9 0 0 1 16.8 20.7V21.8H15.2V20.7A1.9 1.9 0 0 1 16 17.1Z" fill="#ecf7ea"/></svg><svg class="ab" style="left:199px;top:12px" viewBox="0 0 32 32" width="32" height="32"><circle cx="16" cy="16" r="16" fill="rgba(255,149,69,.1)"/><path d="M16 6.9A7.25 7.25 0 0 1 23.25 14.15C23.25 16 22.6 17.5 21.6 18.8L16.6 24.8Q16 25.4 15.4 24.8L10.4 18.8C9.4 17.5 8.75 16 8.75 14.15A7.25 7.25 0 0 1 16 6.9Z M16 10.8A3.3 3.3 0 1 0 16 17.4A3.3 3.3 0 1 0 16 10.8Z" fill="#ff9545" fill-rule="evenodd"/></svg><svg class="ab" style="left:15px;top:60px" viewBox="0 0 32 32" width="32" height="32"><circle cx="16" cy="16" r="16" fill="#ffe9e9"/><g fill="#ff6b6f"><rect x="9" y="10" width="14" height="2.8" rx="1.4"/><path d="M13.3 10.4L14.2 8.4Q14.4 8 14.9 8H17.1Q17.6 8 17.8 8.4L18.7 10.4H16.9V9.3H15.1V10.4Z"/><path d="M10.3 14.1H21.8V22.9C21.8 23.7 21.3 24.1 20.5 24.1H11.6C10.8 24.1 10.3 23.7 10.3 22.9Z"/></g><path d="M13.4 15V21.8M16.05 15V21.8M18.7 15V21.8" stroke="#ffe9e9" stroke-width="1"/></svg></div><div class="fr" style="top:429px"><svg class="ab" style="left:15px;top:12px" viewBox="0 0 32 32" width="32" height="32"><circle cx="16" cy="16" r="16" fill="#ecf5ff"/><g transform="rotate(45 16 16)" fill="#409eff"><path d="M13.5 9.6V7.6C13.5 6.6 14.2 6 15.1 6H16.9C17.8 6 18.5 6.6 18.5 7.6V9.6Z"/><rect x="13.5" y="10.5" width="5" height="11.3"/><path d="M13.5 22.7H18.5L16.3 27.2Q16 27.7 15.7 27.2Z"/></g></svg><svg class="ab" style="left:61px;top:12px" viewBox="0 0 32 32" width="32" height="32"><circle cx="16" cy="16" r="16" fill="#fffbd1"/><g fill="#fcb826"><ellipse cx="15" cy="11.25" rx="7.15" ry="2.4"/><path d="M7.85 14C9 14.9 12 15.3 15.8 15.3V17.1C12 17.1 8.8 16.7 7.85 15.8Z"/><path d="M7.85 17.2C9 18.1 12 18.5 15.8 18.5V20.3C12 20.3 8.8 19.9 7.85 19Z"/><path d="M7.85 20.4C9 21.3 12 21.7 15.8 21.7V23.4C12 23.4 8.8 23 7.85 22.1Z"/></g><circle cx="20.95" cy="19.7" r="6.1" fill="#fffbd1"/><circle cx="20.95" cy="19.7" r="5.15" fill="#fcb826"/><path transform="translate(20.95 19.7)" d="M0 -2.7Q0.7 -0.7 2.7 0Q0.7 0.7 0 2.7Q-0.7 0.7 -2.7 0Q-0.7 -0.7 0 -2.7Z" fill="#fffbd1"/></svg><svg class="ab" style="left:107px;top:12px" viewBox="0 0 32 32" width="32" height="32"><circle cx="16" cy="16" r="16" fill="#fff4ed"/><g fill="#ff9545"><rect x="12.2" y="7" width="7" height="2.1" rx="1"/><path d="M12.9 10.7H19.1C22.4 13 24.1 16 24.1 19.3C24.1 23 21.5 24.8 16 24.8C10.5 24.8 7.9 23 7.9 19.3C7.9 16 9.6 13 12.9 10.7Z"/></g><path d="M13.4 14.6L16 18.2L18.6 14.6M13.2 18.4H18.8M13.2 20.4H18.8M16 18.2V22.4" fill="none" stroke="#fff4ed" stroke-width="1.4"/></svg><svg class="ab" style="left:153px;top:12px" viewBox="0 0 32 32" width="32" height="32"><circle cx="16" cy="16" r="16" fill="#ecf7ea"/><path d="M12.15 15.4V12A3.9 3.9 0 0 1 19.9 12V12.6" fill="none" stroke="#7cc168" stroke-width="1.8"/><rect x="9.1" y="15" width="13.7" height="8.9" rx="0.9" fill="#7cc168"/><path d="M16 17.1A1.9 1.9 0 0 1 16.8 20.7V21.8H15.2V20.7A1.9 1.9 0 0 1 16 17.1Z" fill="#ecf7ea"/></svg><svg class="ab" style="left:199px;top:12px" viewBox="0 0 32 32" width="32" height="32"><circle cx="16" cy="16" r="16" fill="rgba(255,149,69,.1)"/><path d="M16 6.9A7.25 7.25 0 0 1 23.25 14.15C23.25 16 22.6 17.5 21.6 18.8L16.6 24.8Q16 25.4 15.4 24.8L10.4 18.8C9.4 17.5 8.75 16 8.75 14.15A7.25 7.25 0 0 1 16 6.9Z M16 10.8A3.3 3.3 0 1 0 16 17.4A3.3 3.3 0 1 0 16 10.8Z" fill="#ff9545" fill-rule="evenodd"/></svg><svg class="ab" style="left:15px;top:60px" viewBox="0 0 32 32" width="32" height="32"><circle cx="16" cy="16" r="16" fill="#ffe9e9"/><g fill="#ff6b6f"><rect x="9" y="10" width="14" height="2.8" rx="1.4"/><path d="M13.3 10.4L14.2 8.4Q14.4 8 14.9 8H17.1Q17.6 8 17.8 8.4L18.7 10.4H16.9V9.3H15.1V10.4Z"/><path d="M10.3 14.1H21.8V22.9C21.8 23.7 21.3 24.1 20.5 24.1H11.6C10.8 24.1 10.3 23.7 10.3 22.9Z"/></g><path d="M13.4 15V21.8M16.05 15V21.8M18.7 15V21.8" stroke="#ffe9e9" stroke-width="1"/></svg></div><div class="fr" style="top:540px"><svg class="ab" style="left:15px;top:12px" viewBox="0 0 32 32" width="32" height="32"><circle cx="16" cy="16" r="16" fill="#ecf5ff"/><g transform="rotate(45 16 16)" fill="#409eff"><path d="M13.5 9.6V7.6C13.5 6.6 14.2 6 15.1 6H16.9C17.8 6 18.5 6.6 18.5 7.6V9.6Z"/><rect x="13.5" y="10.5" width="5" height="11.3"/><path d="M13.5 22.7H18.5L16.3 27.2Q16 27.7 15.7 27.2Z"/></g></svg><svg class="ab" style="left:61px;top:12px" viewBox="0 0 32 32" width="32" height="32"><circle cx="16" cy="16" r="16" fill="#fffbd1"/><g fill="#fcb826"><ellipse cx="15" cy="11.25" rx="7.15" ry="2.4"/><path d="M7.85 14C9 14.9 12 15.3 15.8 15.3V17.1C12 17.1 8.8 16.7 7.85 15.8Z"/><path d="M7.85 17.2C9 18.1 12 18.5 15.8 18.5V20.3C12 20.3 8.8 19.9 7.85 19Z"/><path d="M7.85 20.4C9 21.3 12 21.7 15.8 21.7V23.4C12 23.4 8.8 23 7.85 22.1Z"/></g><circle cx="20.95" cy="19.7" r="6.1" fill="#fffbd1"/><circle cx="20.95" cy="19.7" r="5.15" fill="#fcb826"/><path transform="translate(20.95 19.7)" d="M0 -2.7Q0.7 -0.7 2.7 0Q0.7 0.7 0 2.7Q-0.7 0.7 -2.7 0Q-0.7 -0.7 0 -2.7Z" fill="#fffbd1"/></svg><svg class="ab" style="left:107px;top:12px" viewBox="0 0 32 32" width="32" height="32"><circle cx="16" cy="16" r="16" fill="#fff4ed"/><g fill="#ff9545"><rect x="12.2" y="7" width="7" height="2.1" rx="1"/><path d="M12.9 10.7H19.1C22.4 13 24.1 16 24.1 19.3C24.1 23 21.5 24.8 16 24.8C10.5 24.8 7.9 23 7.9 19.3C7.9 16 9.6 13 12.9 10.7Z"/></g><path d="M13.4 14.6L16 18.2L18.6 14.6M13.2 18.4H18.8M13.2 20.4H18.8M16 18.2V22.4" fill="none" stroke="#fff4ed" stroke-width="1.4"/></svg><svg class="ab" style="left:153px;top:12px" viewBox="0 0 32 32" width="32" height="32"><circle cx="16" cy="16" r="16" fill="#ecf7ea"/><path d="M12.15 15.4V12A3.9 3.9 0 0 1 19.9 12V12.6" fill="none" stroke="#7cc168" stroke-width="1.8"/><rect x="9.1" y="15" width="13.7" height="8.9" rx="0.9" fill="#7cc168"/><path d="M16 17.1A1.9 1.9 0 0 1 16.8 20.7V21.8H15.2V20.7A1.9 1.9 0 0 1 16 17.1Z" fill="#ecf7ea"/></svg><svg class="ab" style="left:199px;top:12px" viewBox="0 0 32 32" width="32" height="32"><circle cx="16" cy="16" r="16" fill="rgba(255,149,69,.1)"/><path d="M16 6.9A7.25 7.25 0 0 1 23.25 14.15C23.25 16 22.6 17.5 21.6 18.8L16.6 24.8Q16 25.4 15.4 24.8L10.4 18.8C9.4 17.5 8.75 16 8.75 14.15A7.25 7.25 0 0 1 16 6.9Z M16 10.8A3.3 3.3 0 1 0 16 17.4A3.3 3.3 0 1 0 16 10.8Z" fill="#ff9545" fill-rule="evenodd"/></svg><svg class="ab" style="left:15px;top:60px" viewBox="0 0 32 32" width="32" height="32"><circle cx="16" cy="16" r="16" fill="#ffe9e9"/><g fill="#ff6b6f"><rect x="9" y="10" width="14" height="2.8" rx="1.4"/><path d="M13.3 10.4L14.2 8.4Q14.4 8 14.9 8H17.1Q17.6 8 17.8 8.4L18.7 10.4H16.9V9.3H15.1V10.4Z"/><path d="M10.3 14.1H21.8V22.9C21.8 23.7 21.3 24.1 20.5 24.1H11.6C10.8 24.1 10.3 23.7 10.3 22.9Z"/></g><path d="M13.4 15V21.8M16.05 15V21.8M18.7 15V21.8" stroke="#ffe9e9" stroke-width="1"/></svg></div><div class="fr" style="top:651px"><svg class="ab" style="left:15px;top:12px" viewBox="0 0 32 32" width="32" height="32"><circle cx="16" cy="16" r="16" fill="#ecf5ff"/><g transform="rotate(45 16 16)" fill="#409eff"><path d="M13.5 9.6V7.6C13.5 6.6 14.2 6 15.1 6H16.9C17.8 6 18.5 6.6 18.5 7.6V9.6Z"/><rect x="13.5" y="10.5" width="5" height="11.3"/><path d="M13.5 22.7H18.5L16.3 27.2Q16 27.7 15.7 27.2Z"/></g></svg><svg class="ab" style="left:61px;top:12px" viewBox="0 0 32 32" width="32" height="32"><circle cx="16" cy="16" r="16" fill="#fffbd1"/><g fill="#fcb826"><ellipse cx="15" cy="11.25" rx="7.15" ry="2.4"/><path d="M7.85 14C9 14.9 12 15.3 15.8 15.3V17.1C12 17.1 8.8 16.7 7.85 15.8Z"/><path d="M7.85 17.2C9 18.1 12 18.5 15.8 18.5V20.3C12 20.3 8.8 19.9 7.85 19Z"/><path d="M7.85 20.4C9 21.3 12 21.7 15.8 21.7V23.4C12 23.4 8.8 23 7.85 22.1Z"/></g><circle cx="20.95" cy="19.7" r="6.1" fill="#fffbd1"/><circle cx="20.95" cy="19.7" r="5.15" fill="#fcb826"/><path transform="translate(20.95 19.7)" d="M0 -2.7Q0.7 -0.7 2.7 0Q0.7 0.7 0 2.7Q-0.7 0.7 -2.7 0Q-0.7 -0.7 0 -2.7Z" fill="#fffbd1"/></svg><svg class="ab" style="left:107px;top:12px" viewBox="0 0 32 32" width="32" height="32"><circle cx="16" cy="16" r="16" fill="#fff4ed"/><g fill="#ff9545"><rect x="12.2" y="7" width="7" height="2.1" rx="1"/><path d="M12.9 10.7H19.1C22.4 13 24.1 16 24.1 19.3C24.1 23 21.5 24.8 16 24.8C10.5 24.8 7.9 23 7.9 19.3C7.9 16 9.6 13 12.9 10.7Z"/></g><path d="M13.4 14.6L16 18.2L18.6 14.6M13.2 18.4H18.8M13.2 20.4H18.8M16 18.2V22.4" fill="none" stroke="#fff4ed" stroke-width="1.4"/></svg><svg class="ab" style="left:153px;top:12px" viewBox="0 0 32 32" width="32" height="32"><circle cx="16" cy="16" r="16" fill="#ecf7ea"/><path d="M12.15 15.4V12A3.9 3.9 0 0 1 19.9 12V12.6" fill="none" stroke="#7cc168" stroke-width="1.8"/><rect x="9.1" y="15" width="13.7" height="8.9" rx="0.9" fill="#7cc168"/><path d="M16 17.1A1.9 1.9 0 0 1 16.8 20.7V21.8H15.2V20.7A1.9 1.9 0 0 1 16 17.1Z" fill="#ecf7ea"/></svg><svg class="ab" style="left:199px;top:12px" viewBox="0 0 32 32" width="32" height="32"><circle cx="16" cy="16" r="16" fill="rgba(255,149,69,.1)"/><path d="M16 6.9A7.25 7.25 0 0 1 23.25 14.15C23.25 16 22.6 17.5 21.6 18.8L16.6 24.8Q16 25.4 15.4 24.8L10.4 18.8C9.4 17.5 8.75 16 8.75 14.15A7.25 7.25 0 0 1 16 6.9Z M16 10.8A3.3 3.3 0 1 0 16 17.4A3.3 3.3 0 1 0 16 10.8Z" fill="#ff9545" fill-rule="evenodd"/></svg><svg class="ab" style="left:15px;top:60px" viewBox="0 0 32 32" width="32" height="32"><circle cx="16" cy="16" r="16" fill="#ffe9e9"/><g fill="#ff6b6f"><rect x="9" y="10" width="14" height="2.8" rx="1.4"/><path d="M13.3 10.4L14.2 8.4Q14.4 8 14.9 8H17.1Q17.6 8 17.8 8.4L18.7 10.4H16.9V9.3H15.1V10.4Z"/><path d="M10.3 14.1H21.8V22.9C21.8 23.7 21.3 24.1 20.5 24.1H11.6C10.8 24.1 10.3 23.7 10.3 22.9Z"/></g><path d="M13.4 15V21.8M16.05 15V21.8M18.7 15V21.8" stroke="#ffe9e9" stroke-width="1"/></svg></div></div>
</div>
</div>
</body></html>
